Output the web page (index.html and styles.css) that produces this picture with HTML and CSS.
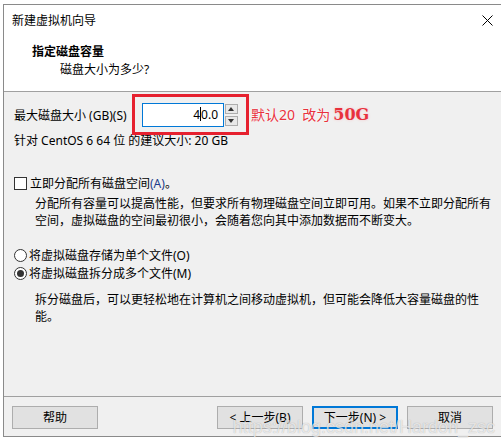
FILE: index.html
```html
<!DOCTYPE html>
<html lang="zh-CN">
  <head>
    <meta charset="UTF-8" />
    <title>新建虚拟机向导</title>
    <link rel="stylesheet" href="styles.css">
  </head>
  <body>
    <div class="window">
      <!-- Title bar -->
      <div class="titlebar">
        <span class="title">新建虚拟机向导</span>
        <svg class="close" width="11" height="11" viewBox="0 0 11 11">
          <path d="M0.5 0.5 L10.5 10.5 M10.5 0.5 L0.5 10.5" stroke="#000" stroke-width="1" fill="none" />
        </svg>
      </div>

      <!-- Wizard header -->
      <div class="header">
        <div class="header-title">指定磁盘容量</div>
        <div class="header-sub">磁盘大小为多少?</div>
      </div>

      <div class="content">
        <div class="size-row">
          <span class="size-label">最大磁盘大小 (GB)(S)</span>
          <div class="spin">
            <div class="spin-input">4<span class="caret"></span>0.0</div>
            <div class="spin-buttons">
              <span class="spin-btn up"></span>
              <span class="spin-btn down"></span>
            </div>
            <div class="mark"></div>
          </div>
          <span class="note">默认20&nbsp; 改为<b>50G</b></span>
        </div>
        <div class="hint">针对 CentOS 6 64 位 的建议大小: 20 GB</div>

        <div class="option check-option">
          <span class="checkbox"></span>立即分配所有磁盘空间<span class="key">(A)</span>。
        </div>
        <p class="desc">分配所有容量可以提高性能，但要求所有物理磁盘空间立即可用。如果不立即分配所有空间，虚拟磁盘的空间最初很小，会随着您向其中添加数据而不断变大。</p>

        <div class="option radio-first">
          <span class="radio"></span>将虚拟磁盘存储为单个文件(O)
        </div>
        <div class="option radio-second">
          <span class="radio checked"></span>将虚拟磁盘拆分成多个文件(M)
        </div>
        <p class="desc desc-split">拆分磁盘后，可以更轻松地在计算机之间移动虚拟机，但可能会降低大容量磁盘的性能。</p>
      </div>

      <!-- Buttons -->
      <div class="footer">
        <button class="btn">帮助</button>
        <div class="btn-group">
          <button class="btn">&lt; 上一步(B)</button>
          <button class="btn default">下一步(N) &gt;</button>
          <button class="btn">取消</button>
        </div>
      </div>

      <div class="watermark">https://blog.csdn.net/Hardon_zsc</div>
    </div>
  </body>
</html>
```

FILE: styles.css
```css
* {
  margin: 0;
  padding: 0;
  box-sizing: border-box;
}

html,
body {
  width: 100%;
  height: 100%;
  background: #fff;
  overflow: hidden;
}

body {
  font-family: "Noto Sans", "Noto Sans CJK SC", sans-serif;
  font-size: 12px;
  color: #000;
}

.window {
  position: relative;
  margin: 4px 0 0 3px;
  width: 498px;
  height: 433px;
  border-left: 1px solid #8a8a8a;
  border-top: 1px solid #8a8a8a;
  border-bottom: 1px solid #8a8a8a;
  display: flex;
  flex-direction: column;
  background: #f0f0f0;
}

.titlebar {
  height: 32px;
  background: #fff;
  display: flex;
  align-items: center;
  justify-content: space-between;
  padding: 0 8px 0 8px;
}

.titlebar .title {
  line-height: 32px;
}

.close {
  margin-top: -2px;
}

.header {
  height: 55px;
  background: #fff;
  border-bottom: 1px solid #a0a0a0;
  padding-top: 6px;
}

.header-title {
  font-weight: bold;
  line-height: 18px;
  padding-left: 28px;
}

.header-sub {
  line-height: 18px;
  padding-left: 56px;
}

.content {
  height: 304px;
  padding-left: 10px;
}

/* Disk size row */
.size-row {
  margin-top: 11px;
  height: 24px;
  display: flex;
  align-items: center;
}

.size-label {
  width: 128px;
  line-height: 17px;
}

.spin {
  position: relative;
  display: flex;
  height: 24px;
  gap: 1px;
}

.spin-input {
  width: 82px;
  height: 24px;
  background: #fff;
  border: 1px solid #0078d7;
  text-align: right;
  padding-right: 5px;
  line-height: 22px;
}

.caret {
  display: inline-block;
  width: 1px;
  height: 14px;
  background: #000;
  vertical-align: -2px;
}

.spin-buttons {
  display: flex;
  flex-direction: column;
  justify-content: space-between;
  padding: 1px 0;
}

.spin-btn {
  position: relative;
  width: 13px;
  height: 10px;
  background: #e8e8e8;
  border: 1px solid #adadad;
}

.spin-btn::after {
  content: "";
  position: absolute;
  left: 2px;
  border-left: 3.5px solid transparent;
  border-right: 3.5px solid transparent;
}

.spin-btn.up::after {
  top: 2px;
  border-bottom: 4px solid #333;
}

.spin-btn.down::after {
  top: 2px;
  border-top: 4px solid #333;
}

/* red annotation box */
.mark {
  position: absolute;
  left: -10px;
  top: -9px;
  right: -11px;
  bottom: -8px;
  border: 3px solid #e6212f;
  pointer-events: none;
}

.note {
  margin-left: 13px;
  font-size: 14px;
  color: #e8313d;
  text-shadow: 0 0 1px #fff, 0 0 2px #fff;
  line-height: 18px;
}

.note b {
  margin-left: 3px;
  font-family: "DejaVu Serif", "Liberation Serif", serif;
  font-size: 16px;
  font-weight: bold;
  text-shadow: 0 0 3px #f4c4c8;
}

.hint {
  margin-top: 5px;
  line-height: 17px;
}

/* options */
.option {
  display: flex;
  align-items: center;
  line-height: 17px;
}

.check-option {
  margin-top: 26px;
}

.checkbox {
  width: 13px;
  height: 13px;
  border: 1px solid #333;
  background: #fff;
  margin-right: 3px;
}

.key {
  color: #1c3c8c;
}

.desc {
  margin-top: 3px;
  padding-left: 21px;
  padding-right: 6px;
  line-height: 17px;
}

.radio-first {
  margin-top: 18px;
}

.radio-second {
  margin-top: 1px;
}

.radio {
  position: relative;
  width: 13px;
  height: 13px;
  border: 1px solid #333;
  border-radius: 50%;
  background: #fff;
  margin-right: 2px;
}

.radio.checked::after {
  content: "";
  position: absolute;
  left: 2px;
  top: 2px;
  width: 7px;
  height: 7px;
  border-radius: 50%;
  background: #333;
}

.desc-split {
  margin-top: 9px;
}

/* footer */
.footer {
  height: 39px;
  border-top: 1px solid #a0a0a0;
  display: flex;
  justify-content: space-between;
  padding: 9px 8px 0 8px;
}

.btn-group {
  display: flex;
  gap: 9px;
}

.btn {
  width: 86px;
  height: 23px;
  background: #e1e1e1;
  border: 1px solid #adadad;
  font-family: "Noto Sans", "Noto Sans CJK SC", sans-serif;
  font-size: 12px;
  color: #000;
  line-height: 20px;
}

.btn.default {
  border: 2px solid #0078d7;
}

.watermark {
  position: absolute;
  right: 6px;
  bottom: -2px;
  font-family: "Liberation Sans", Arial, sans-serif;
  font-size: 18px;
  color: rgba(255, 255, 255, 0.7);
  text-shadow: 0 0 1px rgba(0, 0, 0, 0.3);
  pointer-events: none;
}
```
